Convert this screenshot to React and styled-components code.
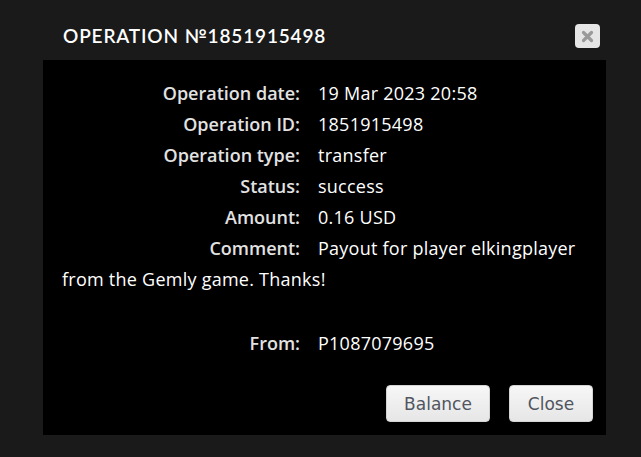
import React from "react";
import styled, { createGlobalStyle } from "styled-components";

const Global = createGlobalStyle`
  html, body {
    margin: 0;
    padding: 0;
    background: #1a1a1a;
  }
`;

const Modal = styled.div`
  width: 641px;
  height: 457px;
  box-sizing: border-box;
  background: #1a1a1a;
  padding: 0 35px 22px 43px;
  display: flex;
  flex-direction: column;
`;

const Header = styled.div`
  height: 60px;
  display: flex;
  align-items: flex-start;
  justify-content: space-between;
  padding-left: 20px;
  box-sizing: border-box;
`;

const Title = styled.h1`
  margin: 0;
  padding-top: 24px;
  font-family: "Lato", "DejaVu Sans", sans-serif;
  font-weight: 600;
  font-size: 19px;
  letter-spacing: 0.85px;
  line-height: 24px;
  color: #fff;
`;

const CloseX = styled.button`
  width: 25px;
  height: 24px;
  margin: 24px 6px 0 0;
  border: none;
  border-radius: 4px;
  background: #e6e6e6;
  display: flex;
  align-items: center;
  justify-content: center;
  padding: 0;
  cursor: pointer;
`;

const Body = styled.div`
  flex: 1;
  background: #000;
  padding: 18px 13px 13px 19px;
  display: flex;
  flex-direction: column;
`;

const Info = styled.div`
  font-family: "Open Sans", "Noto Sans", sans-serif;
  font-size: 18px;
  letter-spacing: 0.25px;
  line-height: 31px;
  color: #fff;
`;

const Row = styled.div``;

const Label = styled.span`
  display: inline-block;
  width: 238px;
  text-align: right;
  margin-right: 18px;
  font-weight: 600;
  letter-spacing: 0;
  color: #e2e2e2;
`;

const Spacer = styled.div`
  height: 33px;
`;

const Actions = styled.div`
  margin-top: auto;
  display: flex;
  justify-content: flex-end;
  gap: 19px;
`;

const Button = styled.button`
  height: 37px;
  min-width: ${(p) => p.$w}px;
  border: 1px solid #d4d4d4;
  border-radius: 4px;
  background: linear-gradient(#f7f7f7, #e6e6e6);
  font-family: "DejaVu Sans", "Verdana", sans-serif;
  font-size: 17px;
  color: #505560;
  padding: 0 16px;
  cursor: pointer;
`;

const rows = [
  ["Operation date:", "19 Mar 2023 20:58"],
  ["Operation ID:", "1851915498"],
  ["Operation type:", "transfer"],
  ["Status:", "success"],
  ["Amount:", "0.16 USD"],
  ["Comment:", "Payout for player elkingplayer from the Gemly game. Thanks!"],
];

export default function App() {
  return (
    <>
      <Global />
      <Modal>
        <Header>
          <Title>OPERATION №1851915498</Title>
          <CloseX aria-label="close">
            <svg width="13" height="13" viewBox="0 0 13 13">
              <path
                d="M2.5 2.5 L10.5 10.5 M10.5 2.5 L2.5 10.5"
                stroke="#9a9a9a"
                strokeWidth="3.2"
                strokeLinecap="round"
              />
            </svg>
          </CloseX>
        </Header>
        <Body>
          <Info>
            {rows.map(([l, v]) => (
              <Row key={l}>
                <Label>{l}</Label>
                {v}
              </Row>
            ))}
            <Spacer />
            <Row>
              <Label>From:</Label>
              P1087079695
            </Row>
          </Info>
          <Actions>
            <Button $w={104}>Balance</Button>
            <Button $w={84}>Close</Button>
          </Actions>
        </Body>
      </Modal>
    </>
  );
}
